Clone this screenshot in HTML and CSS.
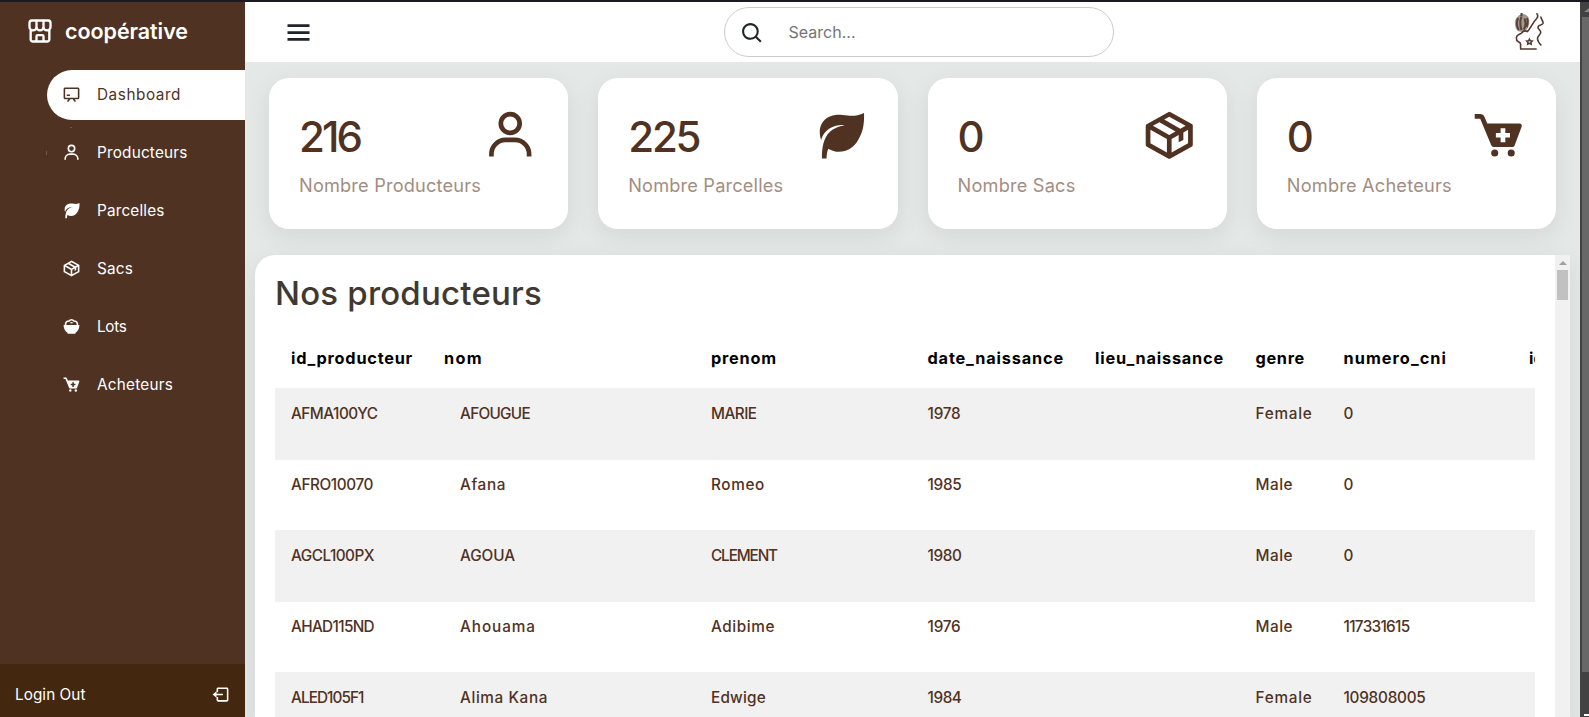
FILE: index.html
```html
<!DOCTYPE html>
<html lang="fr">
<head>
<meta charset="utf-8">
<title>coopérative</title>
<link rel="stylesheet" href="styles.css">
</head>
<body>
<svg class="defs" width="0" height="0">
  <symbol id="user" viewBox="0 0 24 24"><path d="M12 2a5 5 0 1 0 5 5 5 5 0 0 0-5-5zm0 8a3 3 0 1 1 3-3 3 3 0 0 1-3 3zm9 11v-1a7 7 0 0 0-7-7h-4a7 7 0 0 0-7 7v1h2v-1a5 5 0 0 1 5-5h4a5 5 0 0 1 5 5v1z"/></symbol>
  <symbol id="leaf" viewBox="0 0 24 24"><path d="M22.100 2.500C19.800 3.600 17.300 3.900 15.200 3.600 11.800 3.200 10.300 3.200 8.800 3.600 5.300 4.500 3.300 7.200 3.300 10.400c0 1.500.2 2.600.6 3.600.6-2.200 2-4.100 3.900-5.100C9.600 7.900 11.600 7.500 13.800 7.700 11.300 8.200 9.100 9 7.600 10.500 4.800 13.300 4.200 17.200 4.200 21.900h2c0-1.700.2-3 .7-4.200 1.400.9 3 1.300 4.500 1.300 3.500 0 6.400-1.800 8.200-5 1.800-3.100 2.700-6 2.500-11.500z"/></symbol>
  <symbol id="package" viewBox="0 0 24 24"><path d="M22 8a.76.76 0 0 0 0-.21v-.08a.77.77 0 0 0-.07-.16.35.35 0 0 0-.05-.08l-.1-.13-.08-.06-.12-.09-9-5a1 1 0 0 0-1 0l-9 5-.09.07-.11.08a.41.41 0 0 0-.07.11.39.39 0 0 0-.08.1.59.59 0 0 0-.06.14.3.3 0 0 0 0 .1A.76.76 0 0 0 2 8v8a1 1 0 0 0 .52.87l9 5a.75.75 0 0 0 .13.06h.1a1.06 1.06 0 0 0 .5 0h.1l.14-.06 9-5A1 1 0 0 0 22 16V8zm-10 3.870L5.060 8l2.760-1.520 6.830 3.900zm0-7.720L18.940 8 16.700 9.250 9.870 5.340zM4 9.700l7 3.920v5.680l-7-3.890zm9 9.600v-5.680l3-1.680V15l2-1v-3.180l2-1.110v5.700z"/></symbol>
  <symbol id="cart" viewBox="0 0 24 24"><circle cx="10.500" cy="19.500" r="1.500"/><circle cx="17.500" cy="19.500" r="1.500"/><path d="M21.822 7.431A1 1 0 0 0 21 7H7.333L6.179 4.230A1.994 1.994 0 0 0 4.333 3H2v2h2.333l4.744 11.385A1 1 0 0 0 10 17h8c.417 0 .79-.259.937-.648l3-8a1 1 0 0 0-.115-.921zM17 13h-2v2h-2v-2h-2v-2h2V9h2v2h2z"/></symbol>
  <symbol id="board" viewBox="0 0 24 24"><path d="M20 3H4c-1.103 0-2 .897-2 2v11c0 1.103.897 2 2 2h4l-1.800 2.400 1.600 1.200 2.700-3.600h3l2.700 3.600 1.600-1.200L16 18h4c1.103 0 2-.897 2-2V5c0-1.103-.897-2-2-2zM4 16V5h16v11zM6 12h4v2H6z"/></symbol>
  <symbol id="bowl" viewBox="0 0 24 24"><path d="M2 10h20c0 4.500-2 8-5 9.900V21H7v-1.100C4 18 2 14.500 2 10z"/><path d="M4.400 10C4.400 6.800 6.500 5 9 5c.8-1.200 1.900-1.600 3-1.600s2.200.4 3 1.600c2.500 0 4.600 1.800 4.600 5" fill="none" stroke="currentColor" stroke-width="2"/><path d="M10.500 6.500h3V8h-3z"/></symbol>
</svg>
<div class="screen">
  <aside class="sidebar">
    <div class="brand">
      <svg class="brand-icon" viewBox="0 0 24 24"><path d="M5 3h14a2.200 2.200 0 0 1 2 2.200V8.500a3 3 0 0 1-6 0 3 3 0 0 1-6 0 3 3 0 0 1-6 0V5.200A2.200 2.200 0 0 1 5 3zM9 3v5.500M15 3v5.500M4 11v8.200A1.800 1.800 0 0 0 5.800 21h12.400a1.800 1.800 0 0 0 1.800-1.800V11M9 21v-4.500a1 1 0 0 1 1-1h4a1 1 0 0 1 1 1V21"/></svg>
      <span class="brand-name" data-w="123">coopérative</span>
    </div>
    <nav class="menu">
      <a class="item active"><svg><use href="#board"/></svg><span data-w="84">Dashboard</span></a>
      <a class="item marked"><svg><use href="#user"/></svg><span data-w="90.5">Producteurs</span></a>
      <a class="item"><svg><use href="#leaf"/></svg><span data-w="67.5">Parcelles</span></a>
      <a class="item"><svg><use href="#package"/></svg><span data-w="36">Sacs</span></a>
      <a class="item"><svg><use href="#bowl"/></svg><span data-w="29.5">Lots</span></a>
      <a class="item"><svg><use href="#cart"/></svg><span data-w="76">Acheteurs</span></a>
    </nav>
    <div class="logout"><span data-w="70.5">Login Out</span>
      <svg viewBox="0 0 24 24"><path d="m2 12 5 4v-3h8v-2H7V8z"/><path d="M20 3H9C7.897 3 7 3.897 7 5v4h2V5h11v14H9v-4H7v4c0 1.103.897 2 2 2h11c1.103 0 2-.897 2-2V5c0-1.103-.897-2-2-2z"/></svg>
    </div>
  </aside>
  <main class="main">
    <header class="topbar">
      <svg class="burger" viewBox="0 0 24 24"><path d="M4 6h16v2H4zm0 5h16v2H4zm0 5h16v2H4z"/></svg>
      <div class="search">
        <svg viewBox="0 0 24 24"><path d="M10 18a7.952 7.952 0 0 0 4.897-1.688l4.396 4.396 1.414-1.414-4.396-4.396A7.952 7.952 0 0 0 18 10c0-4.411-3.589-8-8-8s-8 3.589-8 8 3.589 8 8 8zm0-14c3.309 0 6 2.691 6 6s-2.691 6-6 6-6-2.691-6-6 2.691-6 6-6z"/></svg>
        <span data-w="67">Search...</span>
      </div>
      <svg class="crest" viewBox="0 0 30 40">
        <path class="pod" d="M7.500 2.500C3.500 4 1 7 1.400 12c.3 4 1.600 6.500 3.500 7C9 20 12 18.500 13 16.500c2.500-4 2.500-9 .5-12-1.500-1.500-4-2.500-6-2z"/>
        <path class="pod-lines" d="M4.200 6c-2 4-1.500 8.500.5 12M7.500 4.500c-1.500 4-1.500 9 0 13.500M10.500 6.500c1.500 4 1.200 8-.7 11M13 6c1 3 .8 6-.5 9M7.500 1v3"/>
        <path class="outline" d="M22.500 1.300c1.500 1.500 1.500 3.500.2 5.200-4 4-5.500 9-9.200 13-2-1-4.500-.5-6 1.500-1.500 1.500-4.500 1.500-5 4-.3 2-.3 3.500 1.500 4.500 2.500 1 3 2.500 2.500 4l.2 3.500h16"/>
        <path class="outline" d="M27 4.500c-.5 2.500 2.700 4.500 2 7-1 2-4.500 1-5 3.500-.3 2.500 3 3 2.700 5.500-.2 2.500-3.500 3.500-3.200 6.500.3 2.500 2 4.500 3.800 6.500"/>
        <path class="flower" d="m15.400 27.200.9 1.600 1.900.2-1.300 1.400.3 1.800-1.800-.8-1.700.8.300-1.800-1.300-1.400 1.900-.2z"/>
      </svg>
    </header>
    <section class="cards">
      <article class="card"><div><div class="num" data-w="61">216</div><div class="label" data-w="182">Nombre Producteurs</div></div><svg><use href="#user"/></svg></article>
      <article class="card"><div><div class="num" data-w="71">225</div><div class="label" data-w="155">Nombre Parcelles</div></div><svg><use href="#leaf"/></svg></article>
      <article class="card"><div><div class="num" data-w="25">0</div><div class="label" data-w="118">Nombre Sacs</div></div><svg><use href="#package"/></svg></article>
      <article class="card"><div><div class="num" data-w="25">0</div><div class="label" data-w="165">Nombre Acheteurs</div></div><svg><use href="#cart"/></svg></article>
    </section>
    <section class="panel">
      <div class="panel-body">
        <h2><span data-w="267">Nos producteurs</span></h2>
        <table>
          <colgroup><col class="c-id"><col class="c-nom"><col class="c-prenom"><col class="c-date"><col class="c-lieu"><col class="c-genre"><col class="c-cni"><col></colgroup>
          <thead><tr><th><span data-w="122">id_producteur</span></th><th><span data-w="39">nom</span></th><th><span data-w="66">prenom</span></th><th><span data-w="136.5">date_naissance</span></th><th><span data-w="129">lieu_naissance</span></th><th><span data-w="49.5">genre</span></th><th><span data-w="103.5">numero_cni</span></th><th>id_section</th></tr></thead>
          <tbody>
            <tr><td><span data-w="86.5">AFMA100YC</span></td><td><span data-w="70">AFOUGUE</span></td><td><span data-w="45.5">MARIE</span></td><td><span data-w="33">1978</span></td><td></td><td><span data-w="57">Female</span></td><td>0</td><td></td></tr>
            <tr><td><span data-w="82">AFRO10070</span></td><td><span data-w="46">Afana</span></td><td><span data-w="54">Romeo</span></td><td><span data-w="34">1985</span></td><td></td><td><span data-w="37.5">Male</span></td><td>0</td><td></td></tr>
            <tr><td><span data-w="83">AGCL100PX</span></td><td><span data-w="55">AGOUA</span></td><td><span data-w="66">CLEMENT</span></td><td><span data-w="34">1980</span></td><td></td><td><span data-w="37.5">Male</span></td><td>0</td><td></td></tr>
            <tr><td><span data-w="83">AHAD115ND</span></td><td><span data-w="76">Ahouama</span></td><td><span data-w="64">Adibime</span></td><td><span data-w="33">1976</span></td><td></td><td><span data-w="37.5">Male</span></td><td><span data-w="66">117331615</span></td><td></td></tr>
            <tr><td><span data-w="72.5">ALED105F1</span></td><td><span data-w="88">Alima Kana</span></td><td><span data-w="55">Edwige</span></td><td><span data-w="34">1984</span></td><td></td><td><span data-w="57">Female</span></td><td><span data-w="82">109808005</span></td><td></td></tr>
          </tbody>
        </table>
      </div>
      <div class="scroll"><i class="arrow"></i><i class="thumb"></i></div>
    </section>
  </main>
  <div class="page-scroll"><i class="arrow"></i><i class="thumb"></i><i class="corner"></i></div>
</div>
<script src="script.js"></script>
</body>
</html>
```
FILE: styles.css
```css
* { box-sizing: border-box; margin: 0; padding: 0; }
body { font-family: Inter, "Open Sans", sans-serif; background: #e4e9e7; overflow: hidden; }
svg { display: block; flex: none; fill: currentColor; }
.defs { position: absolute; }
[data-w] { display: inline-block; white-space: nowrap; }
.screen { display: flex; width: 1589px; height: 717px; border-top: 2px solid #1c1a20; overflow: hidden; }

.sidebar { flex: none; width: 245px; background: #503223; color: #fff; display: flex; flex-direction: column; position: relative; z-index: 1; }
.brand { display: flex; align-items: center; height: 60px; padding: 0 0 2px 26px; }
.brand-icon { width: 28px; height: 28px; fill: none; stroke: #fff; stroke-width: 2; }
.brand-name { margin-left: 11px; font-size: 21.5px; font-weight: 600; }
.menu { display: flex; flex-direction: column; gap: 8px; margin-top: 8px; padding-left: 47px; }
.item { display: flex; align-items: center; height: 50px; padding: 0 0 1px 15px; font-size: 15.3px; line-height: 19px; position: relative; }
.item svg { width: 19px; height: 19px; }
.item span { margin-left: 16px; }
.active { background: #fff; color: #503223; border-radius: 25px 0 0 25px; }
.marked::before, .marked::after { content: ""; position: absolute; background: #75594b; }
.marked::before { left: 23px; top: -1px; width: 2px; height: 1px; }
.marked::after { left: -1px; top: 23px; width: 1px; height: 4px; }
.logout { margin-top: auto; height: 53px; background: #43270e; display: flex; align-items: center; justify-content: space-between; padding: 7px 15px 0 15px; font-size: 15.3px; line-height: 19px; }
.logout svg { width: 19px; height: 19px; }

.main { flex: none; width: 1335px; display: flex; flex-direction: column; }
.topbar { flex: none; height: 60px; background: #fff; display: flex; align-items: center; padding: 0 36px 0 37px; color: #1f252b; }
.burger { width: 33px; height: 33px; }
.search { width: 390px; height: 50px; margin-left: 409px; border: 1px solid #ccc; border-radius: 25px; display: flex; align-items: center; padding-left: 15px; }
.search svg { width: 25px; height: 25px; margin-top: 2px; }
.search span { margin-left: 23.5px; font-size: 16px; color: #757575; }
.crest { width: 30px; height: 40px; margin-left: auto; fill: none; stroke: #503a30; }
.crest .pod { fill: #a5978f; stroke-width: .6; stroke: #8d7c73; }
.crest .pod-lines { stroke-width: 2; stroke: #57443b; }
.crest .outline { stroke-width: 1.6; }
.crest .flower { stroke-width: 1.5; }

.cards { display: grid; grid-template-columns: repeat(4, 1fr); gap: 30px; padding: 16px 24px 0; }
.card { height: 151px; border-radius: 20px; background: #fff; color: #503223; box-shadow: 0 7px 25px rgba(0,0,0,.08); display: flex; justify-content: space-between; padding: 29px 29.5px 0 30px; }
.card svg { width: 56.5px; height: 56.5px; }
.num { font-size: 42px; font-weight: 500; line-height: 60px; }
.card .label { display: block; font-size: 18.2px; line-height: 26px; margin-top: 5px; color: #a38d81; }

.panel { flex: none; margin: 26px 10px 0; height: 480px; background: #fff; border-radius: 20px 0 0 0; box-shadow: 0 7px 25px rgba(0,0,0,.08); display: flex; }
.panel-body { flex: none; width: 1260px; margin-left: 20px; overflow: hidden; }
h2 { font-size: 33px; font-weight: 500; line-height: 38px; padding-top: 19px; height: 76px; color: #3f3931; }
table { table-layout: fixed; border-collapse: collapse; width: 1420px; }
.c-id { width: 153px; } .c-nom { width: 267px; } .c-prenom { width: 216.5px; } .c-date { width: 167.5px; }
.c-lieu { width: 160.5px; } .c-genre { width: 88px; } .c-cni { width: 185.5px; }
th { height: 57px; padding: 0 16px 2px; text-align: left; font-size: 16.3px; line-height: 19px; font-weight: 700; color: #000; }
td { height: 70px; padding: 15px 16px 0; vertical-align: top; line-height: 19px; font-size: 15.3px; font-weight: 500; color: #503223; white-space: nowrap; }
tbody tr:nth-child(odd) td { height: 72px; padding-top: 16px; background: #f1f1f1; }
td:nth-child(2) { padding-left: 32px; }

.scroll { margin-left: auto; width: 15px; background: #f1f1f1; display: flex; flex-direction: column; align-items: center; }
.scroll .arrow { margin-top: 6px; border: 4px solid transparent; border-top: 0; border-bottom-color: #a0a0a0; }
.scroll .thumb { margin-top: 5px; width: 11px; height: 30px; background: #c1c1c1; }
.page-scroll { flex: none; width: 9px; background: #424242; display: flex; flex-direction: column; overflow: hidden; padding-left: 2px; }
.page-scroll .arrow { margin: 6px 0 0 2px; border: 5px solid transparent; border-top: 0; border-bottom: 4px solid #868686; width: 10px; }
.page-scroll .thumb { margin-top: 5px; height: 655px; background: #686868; flex: none; }
.page-scroll .corner { margin: 42px 0 0 2px; width: 5px; height: 2px; background: #fff; flex: none; }
```
FILE: script.js
```js
// Tracks each label so that it fills its design width.
document.querySelectorAll('[data-w]').forEach(function (el) {
  el.style.width = 'max-content';
  var natural = el.getBoundingClientRect().width;
  var gap = (parseFloat(el.dataset.w) - natural) / el.textContent.length;
  el.style.letterSpacing = gap.toFixed(3) + 'px';
});
```
